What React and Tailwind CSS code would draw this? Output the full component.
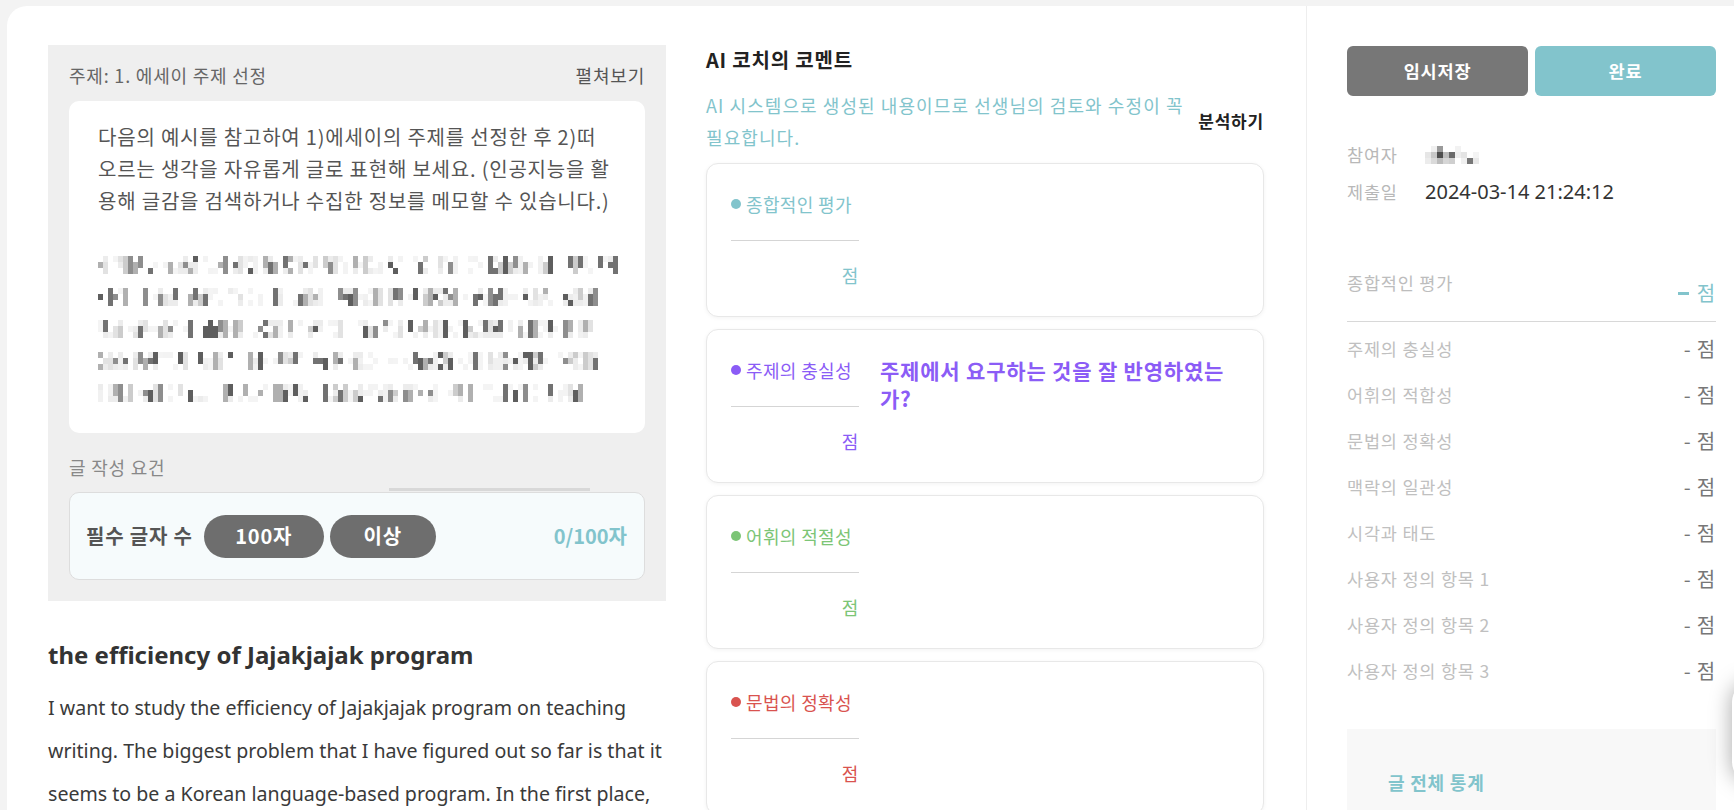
import React from 'react'

// deterministic noise for the pixelated (privacy-masked) text
function makeRand(seed) {
  let s = seed
  return () => {
    s = (s * 16807) % 2147483647
    return (s - 1) / 2147483646
  }
}

const inks = ['#f1f1f1', '#e2e2e2', '#cccccc', '#b0b0b0', '#8e8e8e', '#727272', '#5e5e5e']

function buildMosaic(seed, lengths) {
  const rand = makeRand(seed)
  return lengths.map((cells) => {
    const rows = [[], [], []]
    let i = 0
    while (i < cells) {
      const word = 2 + Math.floor(rand() * 8)
      for (let k = 0; k < word && i < cells; k++, i++) {
        // each column carries one ink tone, strokes run vertically
        const blank = rand() < 0.3
        const tone = inks[Math.floor(Math.pow(rand(), 0.9) * inks.length)]
        rows.forEach((row, ri) => {
          if (blank) return row.push(rand() > 0.7 ? '#f4f4f4' : '#ffffff')
          const keep = ri === 1 ? rand() < 0.85 : rand() < 0.55
          row.push(keep ? tone : rand() > 0.5 ? '#ececec' : '#ffffff')
        })
      }
      const gap = 1 + Math.floor(rand() * 3)
      for (let k = 0; k < gap && i < cells; k++, i++) {
        rows.forEach((row) => row.push(rand() > 0.85 ? '#f3f3f3' : '#ffffff'))
      }
    }
    return rows
  })
}

const mosaicLines = buildMosaic(211, [104, 101, 101, 100, 97])

const MaskedText = () => (
  <div>
    {mosaicLines.map((rows, li) => (
      <div key={li} className="flex h-[32px] flex-col justify-center">
        {rows.map((row, ri) => (
          <div key={ri} className="flex h-[6px]">
            {row.map((c, ci) => (
              <span key={ci} className="block h-[6px] w-[5px]" style={{ background: c }} />
            ))}
          </div>
        ))}
      </div>
    ))}
  </div>
)

const nameCells = [
  ['#ffffff', '#f0f0f0', '#9a9a9a', '#ffffff', '#ffffff', '#f2f2f2', '#ffffff', '#ffffff', '#ffffff'],
  ['#e6e6e6', '#c8c8c8', '#4e4e4e', '#bdbdbd', '#6a6a6a', '#ededed', '#e4e4e4', '#ffffff', '#f4f4f4'],
  ['#ececec', '#dadada', '#bcbcbc', '#d6d6d6', '#cfcfcf', '#ffffff', '#f0f0f0', '#777777', '#e8e8e8'],
]

const NameMask = () => (
  <div className="flex h-[28px] flex-col justify-center">
    {nameCells.map((row, ri) => (
      <div key={ri} className="flex h-[6px]">
        {row.map((c, ci) => (
          <span key={ci} className="block h-[6px] w-[6px]" style={{ background: c }} />
        ))}
      </div>
    ))}
  </div>
)

const criteria = [
  { label: '종합적인 평가', dot: 'bg-[#82c4cc]', text: 'text-[#82c4cc]' },
  { label: '주제의 충실성', dot: 'bg-[#8b5cf6]', text: 'text-[#8b5cf6]', desc: true },
  { label: '어휘의 적절성', dot: 'bg-[#7cc576]', text: 'text-[#7cc576]' },
  { label: '문법의 정확성', dot: 'bg-[#d9534f]', text: 'text-[#d9534f]' },
]

const scoreRows = [
  '주제의 충실성',
  '어휘의 적합성',
  '문법의 정확성',
  '맥락의 일관성',
  '시각과 태도',
  '사용자 정의 항목 1',
  '사용자 정의 항목 2',
  '사용자 정의 항목 3',
]

const App = () => {
  return (
    <div className="relative h-[810px] overflow-hidden bg-[#f3f3f3] pl-[7px] pt-[6px] font-['Noto_Sans_CJK_KR',sans-serif] tracking-[0.05em]">
      <div className="flex h-full rounded-tl-[20px] bg-white">
        <div className="flex gap-[40px] pl-[41px] pt-[39px]">
          {/* Left: prompt + essay */}
          <div className="w-[618px]">
            <div className="bg-[#efefef] px-[21px] pb-[21px] pt-[18px]">
              <div className="flex h-[24px] items-center justify-between text-[18px] leading-[24px] text-[#666]">
                <span>주제: 1. 에세이 주제 선정</span>
                <span className="text-[#555]">펼쳐보기</span>
              </div>
              <div className="mt-[14px] rounded-[10px] bg-white pb-[24px] pl-[29px] pr-[20px] pt-[20px] text-[20px] leading-[32px] tracking-[0.04em] text-[#555]">
                <p className="whitespace-nowrap">
                  다음의 예시를 참고하여 1)에세이의 주제를 선정한 후 2)떠
                  <br />
                  오르는 생각을 자유롭게 글로 표현해 보세요. (인공지능을 활
                  <br />
                  용해 글감을 검색하거나 수집한 정보를 메모할 수 있습니다.)
                </p>
                <div className="h-[32px]" />
                <MaskedText />
              </div>
              <div className="mt-[22px] text-[18px] leading-[24px] text-[#888]">글 작성 요건</div>
              <div className="ml-[320px] mt-[9px] h-[3px] w-[201px] bg-[#d8d8d8]" />
              <div className="mt-[1px] flex h-[88px] items-center rounded-[10px] border border-[#dddddd] bg-[#f6fbfc] pl-[16px] pr-[17px]">
                <span className="text-[20px] font-bold text-[#555]">필수 글자 수</span>
                <span className="ml-[11px] flex h-[43px] w-[120px] items-center justify-center rounded-full bg-[#6e6e6e] text-[20px] font-bold text-white">
                  100자
                </span>
                <span className="ml-[6px] flex h-[43px] w-[106px] items-center justify-center rounded-full bg-[#6e6e6e] text-[20px] font-bold text-white">
                  이상
                </span>
                <span className="ml-auto text-[20px] font-bold tracking-normal text-[#82c4cc]">0/100자</span>
              </div>
            </div>

            <h2 className="mt-[38px] font-['Noto_Sans','Noto_Sans_CJK_KR',sans-serif] text-[24px] font-bold leading-[32px] tracking-normal text-[#333]">
              the efficiency of Jajakjajak program
            </h2>
            <p className="mt-[15px] whitespace-nowrap font-['Noto_Sans','Noto_Sans_CJK_KR',sans-serif] text-[19.6px] leading-[43px] tracking-normal text-[#3a3a3a]">
              I want to study the efficiency of Jajakjajak program on teaching
              <br />
              writing. The biggest problem that I have figured out so far is that it
              <br />
              seems to be a Korean language-based program. In the first place,
            </p>
          </div>

          {/* Middle: AI coach comments */}
          <div className="w-[558px]">
            <h3 className="text-[20px] font-bold leading-[30px] text-[#222]">AI 코치의 코멘트</h3>
            <div className="mt-[14px] flex items-center justify-between">
              <p className="text-[18px] leading-[32px] tracking-[0.06em] text-[#82c4cc]">
                AI 시스템으로 생성된 내용이므로 선생님의 검토와 수정이 꼭
                <br />
                필요합니다.
              </p>
              <span className="text-[17px] font-bold text-[#222]">분석하기</span>
            </div>
            <div className="mt-[10px] flex flex-col gap-[12px]">
              {criteria.map((c) => (
                <div
                  key={c.label}
                  className="flex gap-[21px] rounded-[12px] border border-[#e8e8e8] bg-white pb-[27px] pl-[24px] pt-[26px] shadow-[0_1px_4px_rgba(0,0,0,0.05)]"
                >
                  <div className="w-[128px] shrink-0">
                    <div className={`flex h-[28px] items-center gap-[5px] whitespace-nowrap text-[18px] tracking-[0.02em] ${c.text}`}>
                      <span className={`h-[10px] w-[10px] shrink-0 rounded-full ${c.dot}`} />
                      <span>{c.label}</span>
                    </div>
                    <div className="mt-[22px] h-px bg-[#d5d5d5]" />
                    <div className={`mt-[20px] text-right text-[18px] leading-[28px] ${c.text}`}>점</div>
                  </div>
                  {c.desc && (
                    <p className="whitespace-nowrap text-[21px] font-bold leading-[28px] text-[#8b5cf6]">
                      주제에서 요구하는 것을 잘 반영하였는
                      <br />
                      가?
                    </p>
                  )}
                </div>
              ))}
            </div>
          </div>
        </div>

        {/* Right: actions + scores */}
        <aside className="ml-[42px] flex-1 border-l border-[#eeeeee] pl-[40px] pt-[40px]">
          <div className="flex gap-[7px]">
            <button className="flex h-[50px] w-[181px] items-center justify-center rounded-[6px] bg-[#777777] text-[17.5px] font-bold text-white">
              임시저장
            </button>
            <button className="flex h-[50px] w-[181px] items-center justify-center rounded-[6px] bg-[#82c4cc] text-[17.5px] font-bold text-white">
              완료
            </button>
          </div>

          <div className="mt-[45px] flex h-[28px] items-center">
            <span className="w-[78px] text-[17.5px] text-[#b8b8b8]">참여자</span>
            <NameMask />
          </div>
          <div className="mt-[9px] flex h-[28px] items-center">
            <span className="w-[78px] text-[17.5px] text-[#b8b8b8]">제출일</span>
            <span className="font-['Noto_Sans',sans-serif] text-[20px] tracking-normal text-[#333]">2024-03-14 21:24:12</span>
          </div>

          <div className="mt-[63px] flex w-[369px] items-start justify-between border-b border-[#d8d8d8] pb-[14px]">
            <span className="text-[17.5px] leading-[28px] text-[#bdbdbd]">종합적인 평가</span>
            <span className="mt-[10px] flex items-center gap-[8px] text-[20px] leading-[28px] text-[#82c4cc]">
              <span className="h-[3px] w-[11px] bg-[#82c4cc]" />
              점
            </span>
          </div>

          <div className="mt-[4px] w-[369px]">
            {scoreRows.map((r) => (
              <div key={r} className="flex h-[46px] items-center justify-between">
                <span className="text-[17.5px] text-[#c0c0c0]">{r}</span>
                <span className="text-[20px] text-[#777]">- 점</span>
              </div>
            ))}
          </div>

          <div className="mt-[35px] h-[200px] w-[369px] bg-[#f8f8f8] pl-[41px] pt-[39px]">
            <span className="text-[18px] font-bold leading-[28px] text-[#82c4cc]">글 전체 통계</span>
          </div>
        </aside>
      </div>

      {/* floating button peeking in from the right edge */}
      <div className="absolute right-[-38px] top-[682px] h-[100px] w-[40px] rounded-full bg-white shadow-[0_0_22px_rgba(0,0,0,0.35)]" />
    </div>
  )
}

export default App
